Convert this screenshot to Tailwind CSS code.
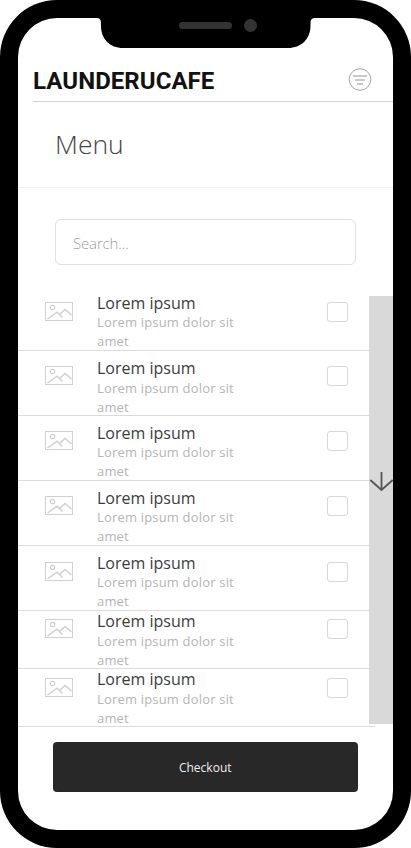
<!DOCTYPE html>
<html lang="en">
<head>
<meta charset="utf-8">
<title>Launderucafe</title>
<script src="https://cdn.jsdelivr.net/npm/@tailwindcss/browser@4"></script>
</head>
<body class="bg-white font-['Open_Sans',sans-serif]">
<div class="relative w-[411px] h-[848px] overflow-hidden rounded-[57px] bg-black p-[18px]">
  <svg class="absolute left-[96px] top-[17px] z-10" width="220" height="32" viewBox="0 0 220 32" fill="#000"><path d="M0 0H220V1H219Q215 1 214.500 5V9C214.500 22 205 31 192 31H27C14 31 5 22 5 9V5Q4.500 1 1 1H0Z"/></svg>
  <div class="absolute left-[179px] top-[22px] z-20 h-[7px] w-[53px] rounded-full bg-[#333]"></div>
  <div class="absolute left-[244px] top-[19px] z-20 size-[13px] rounded-full bg-[#333]"></div>
  <main class="flex h-[812px] w-[375px] flex-col overflow-hidden rounded-[39px] bg-white">
    <header class="ml-[15px] flex h-[84px] shrink-0 items-end justify-between border-b border-[#d2d2d2] pr-[21px] pb-[9px]">
      <h1 class="-mb-px font-['Roboto',sans-serif] text-[24px] leading-[24px] font-bold tracking-[0.06px] whitespace-nowrap text-[#121212]">LAUNDERUCAFE</h1>
      <svg width="24" height="24" viewBox="0 0 24 24" fill="none" stroke="#b8b8b8"><circle cx="12" cy="11.500" r="10.800" stroke="#a5a5a5"/><path d="M5 8H19M7 12H17M9 16H15" stroke-width="1.300"/></svg>
    </header>
    <div class="flex h-[86px] shrink-0 items-center border-b border-[#efefef] pb-[2px] pl-[37px]">
      <h2 class="text-[26.500px] leading-[36px] font-light text-[#444]">Menu</h2>
    </div>
    <div class="mt-[31px] ml-[37px] flex h-[46px] w-[301px] shrink-0 items-center rounded-[6px] border border-[#e0e0e0] pl-[17px] pt-[2px] text-[15px] font-light tracking-[-0.150px] text-[#a0a0a0]">Search...</div>
    <section class="mt-[20px] flex h-[442px] shrink-0">
      <ul id="items" class="w-[351px] shrink-0"></ul>
      <div class="mt-[11px] flex h-[428px] w-[24px] shrink-0 flex-col bg-[#d9d9d9] pt-[175px]">
        <svg width="24" height="22" viewBox="0 0 24 22" fill="none" stroke="#555" stroke-width="1.800"><path d="M12.500 1V19M1.300 9L12.500 19L23.700 9"/></svg>
      </div>
    </section>
    <button class="mt-[15px] ml-[34.500px] h-[49.500px] w-[305.500px] shrink-0 rounded-[4px] bg-[#282828] pt-[2px] text-[12px] text-[#eee]">Checkout</button>
  </main>
</div>
<script>
// Row height, icon offset from the row top, extra gap above the description
const rows = [[66, 17, 0], [65, 15, 1], [65, 15, 0], [65, 15, 0], [65, 16, 0], [58, 8, 1], [58, 9, 1]];
document.getElementById('items').innerHTML = rows.map(([h, icon, desc], i) => `
  <li class="flex items-start border-b border-[#dcdcdc] pl-[27px] ${i === 6 ? 'w-[357px]' : 'w-[351px]'}" style="height:${h}px">
    <svg class="shrink-0" style="margin-top:${icon}px" width="28" height="19" viewBox="0 0 28 19" fill="none" stroke="#d0d0d0"><rect x=".5" y=".5" width="27" height="18"/><circle cx="7.500" cy="5.500" r="2.200" stroke-width="1.200"/><path d="M2.500 17L12 10.200L17.500 15.500M14.500 12.500L20 7.500L26.500 13" stroke-width="1.500"/></svg>
    <div class="ml-[24px] w-[160px]" style="margin-top:${h - 59}px">
      <h3 class="text-[16px] leading-[22px] text-[#3c3c3c]">Lorem ipsum</h3>
      <p class="-mt-px text-[13px] leading-[19px] tracking-[0.18px] text-[#b5b5b5]" style="padding-top:${desc}px">Lorem ipsum dolor sit amet</p>
    </div>
    <span class="ml-[69.500px] h-[19.500px] w-[21px] rounded-[3px] border border-[#d8d8d8]" style="margin-top:${icon}px"></span>
  </li>`).join('');
</script>
</body>
</html>
